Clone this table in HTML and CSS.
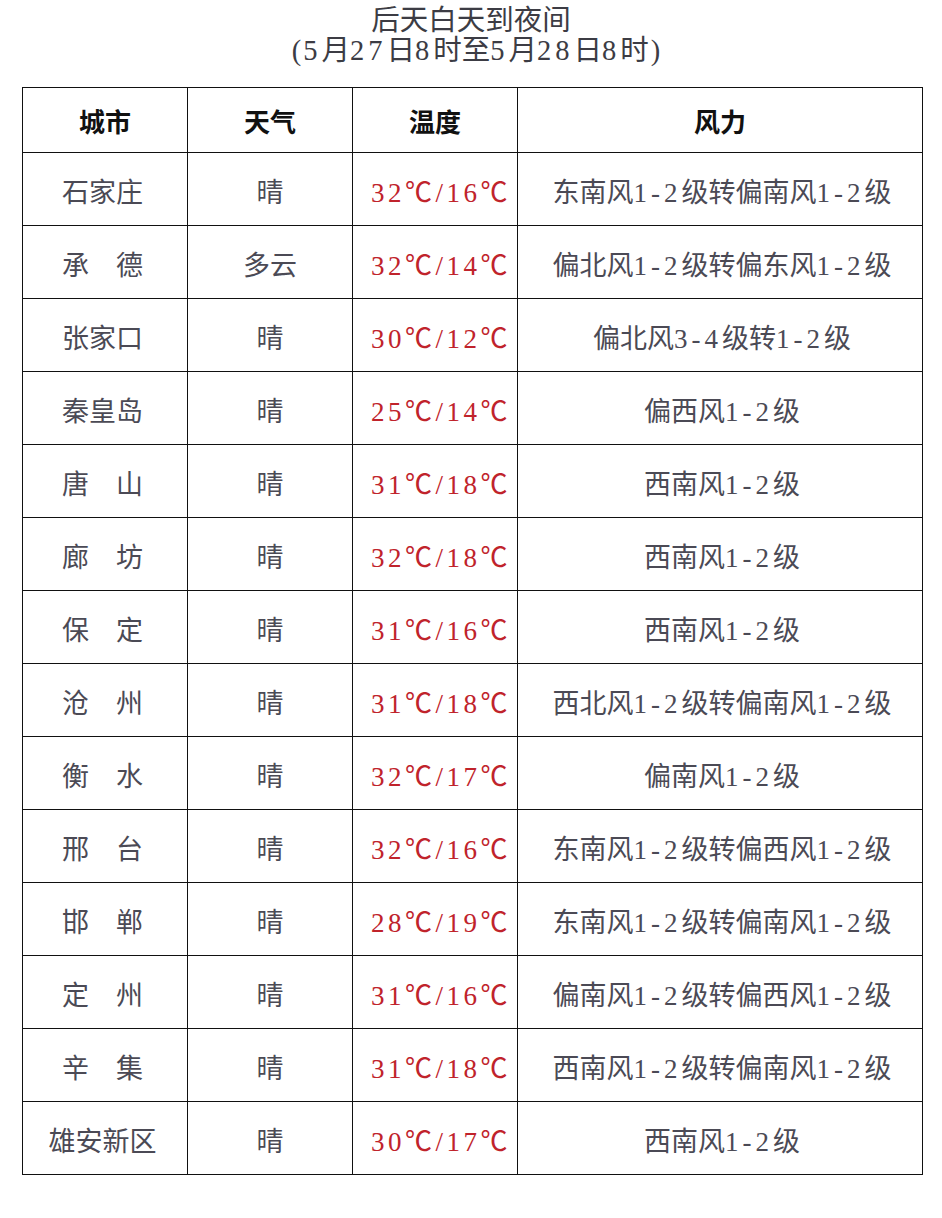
FILE: index.html
```html
<!DOCTYPE html>
<html lang="zh-CN">
<head>
<meta charset="utf-8">
<title>后天白天到夜间</title>
<link rel="stylesheet" href="styles.css">
</head>
<body>
<div class="title">
  <div class="t1">后天白天到夜间</div>
  <div class="t2"><span class="p">(</span><span class="n">5</span>月<span class="n">27</span>日<span class="n">8</span>时至<span class="n">5</span>月<span class="n">28</span>日<span class="n">8</span>时<span class="p">)</span></div>
</div>
<table class="wx">
  <colgroup><col class="c1"><col class="c2"><col class="c3"><col class="c4"></colgroup>
  <thead>
    <tr><th>城市</th><th>天气</th><th>温度</th><th>风力</th></tr>
  </thead>
  <tbody>
    <tr><td class="city">石家庄</td><td>晴</td><td class="temp">32℃/16℃</td><td class="wind">东南风<span class="n">1-2</span>级转偏南风<span class="n">1-2</span>级</td></tr>
    <tr><td class="city">承　德</td><td>多云</td><td class="temp">32℃/14℃</td><td class="wind">偏北风<span class="n">1-2</span>级转偏东风<span class="n">1-2</span>级</td></tr>
    <tr><td class="city">张家口</td><td>晴</td><td class="temp">30℃/12℃</td><td class="wind">偏北风<span class="n">3-4</span>级转<span class="n">1-2</span>级</td></tr>
    <tr><td class="city">秦皇岛</td><td>晴</td><td class="temp">25℃/14℃</td><td class="wind">偏西风<span class="n">1-2</span>级</td></tr>
    <tr><td class="city">唐　山</td><td>晴</td><td class="temp">31℃/18℃</td><td class="wind">西南风<span class="n">1-2</span>级</td></tr>
    <tr><td class="city">廊　坊</td><td>晴</td><td class="temp">32℃/18℃</td><td class="wind">西南风<span class="n">1-2</span>级</td></tr>
    <tr><td class="city">保　定</td><td>晴</td><td class="temp">31℃/16℃</td><td class="wind">西南风<span class="n">1-2</span>级</td></tr>
    <tr><td class="city">沧　州</td><td>晴</td><td class="temp">31℃/18℃</td><td class="wind">西北风<span class="n">1-2</span>级转偏南风<span class="n">1-2</span>级</td></tr>
    <tr><td class="city">衡　水</td><td>晴</td><td class="temp">32℃/17℃</td><td class="wind">偏南风<span class="n">1-2</span>级</td></tr>
    <tr><td class="city">邢　台</td><td>晴</td><td class="temp">32℃/16℃</td><td class="wind">东南风<span class="n">1-2</span>级转偏西风<span class="n">1-2</span>级</td></tr>
    <tr><td class="city">邯　郸</td><td>晴</td><td class="temp">28℃/19℃</td><td class="wind">东南风<span class="n">1-2</span>级转偏南风<span class="n">1-2</span>级</td></tr>
    <tr><td class="city">定　州</td><td>晴</td><td class="temp">31℃/16℃</td><td class="wind">偏南风<span class="n">1-2</span>级转偏西风<span class="n">1-2</span>级</td></tr>
    <tr><td class="city">辛　集</td><td>晴</td><td class="temp">31℃/18℃</td><td class="wind">西南风<span class="n">1-2</span>级转偏南风<span class="n">1-2</span>级</td></tr>
    <tr><td class="city">雄安新区</td><td>晴</td><td class="temp">30℃/17℃</td><td class="wind">西南风<span class="n">1-2</span>级</td></tr>
  </tbody>
</table>
</body>
</html>
```
FILE: styles.css
```css
html, body {
  margin: 0;
  padding: 0;
  background: #ffffff;
}
body {
  font-family: "Liberation Serif", "Noto Sans CJK SC", serif;
  color: #4b4a55;
}
.n {
  letter-spacing: 4px;
}
.title {
  padding-top: 6px;
  text-align: center;
  color: #3c3c44;
  font-size: 28.5px;
  line-height: 30px;
}
.t2 {
  padding-left: 10px;
}
.t2 .p {
  padding: 0 2px;
}
.wx {
  margin: 21px 0 0 22px;
  border-collapse: collapse;
  table-layout: fixed;
  width: 900px;
}
.c1, .c2, .c3 { width: 165px; }
.c4 { width: 405px; }
.wx th, .wx td {
  border: 1.5px solid #111;
  text-align: center;
  vertical-align: middle;
  padding: 0;
  font-size: 27px;
  font-weight: normal;
}
.wx th {
  height: 64px;
  color: #111;
  font-weight: bold;
  font-size: 26px;
}
.wx td {
  height: 69px;
  padding-top: 3px;
}
.wx td.city {
  padding-right: 5px;
}
.wx td.temp {
  color: #c0232b;
  letter-spacing: 3.5px;
  padding-left: 12px;
}
.wx td.wind {
  padding-left: 4px;
}
```
